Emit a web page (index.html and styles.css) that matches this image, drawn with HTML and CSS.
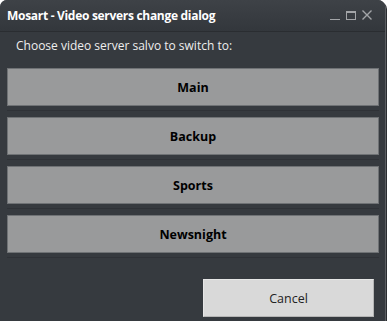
FILE: index.html
```html
<!DOCTYPE html>
<html lang="en">

<head>
    <meta charset="UTF-8">
    <title>Mosart - Video servers change dialog</title>
    <link rel="stylesheet" href="styles.css">
</head>

<body>
    <div class="window">
        <div class="title-bar">
            <div class="title">Mosart - Video servers change dialog</div>
            <div class="window-controls">
                <svg width="10" height="10" viewBox="0 0 10 10"><path d="M0 9.5H10" stroke="#a3a5a8" stroke-width="1"/></svg>
                <svg width="10" height="10" viewBox="0 0 10 10"><rect x="0.5" y="1.5" width="9" height="8" fill="none" stroke="#a3a5a8" stroke-width="1"/><path d="M0 2.5H10" stroke="#a3a5a8" stroke-width="1"/></svg>
                <svg width="10" height="10" viewBox="0 0 10 10"><path d="M0.5 0.5L9.5 9.5M9.5 0.5L0.5 9.5" stroke="#a3a5a8" stroke-width="1.4"/></svg>
            </div>
        </div>
        <div class="dialog-body">
            <div class="prompt">Choose video server salvo to switch to:</div>
            <div class="salvo-list">
                <div class="salvo-row"><button class="salvo-button">Main</button></div>
                <div class="salvo-row"><button class="salvo-button">Backup</button></div>
                <div class="salvo-row"><button class="salvo-button">Sports</button></div>
                <div class="salvo-row"><button class="salvo-button">Newsnight</button></div>
            </div>
            <div class="footer">
                <button class="cancel-button">Cancel</button>
            </div>
        </div>
    </div>
</body>

</html>
```

FILE: styles.css
```css
body,
html {
    margin: 0;
    padding: 0;
    background: #ffffff;
    font-family: "Open Sans", "Noto Sans", sans-serif;
}

.window {
    width: 385px;
    height: 321px;
    background: #363a3f;
    border-radius: 7px 7px 0 0;
    box-shadow: 1px 1px 0 #5a5d61, 2px 2px 0 #2a2d31;
    display: flex;
    flex-direction: column;
    overflow: hidden;
}

.title-bar {
    height: 31px;
    flex: none;
    background: linear-gradient(#3e4247, #33373c);
    border-bottom: 1px solid #2a2d31;
    display: flex;
    align-items: center;
    justify-content: space-between;
    padding: 0 13px 0 7px;
}

.title {
    color: #ffffff;
    font-weight: bold;
    font-size: 12px;
    letter-spacing: -0.3px;
}

.window-controls {
    display: flex;
    gap: 6px;
    margin-top: -2px;
}

.dialog-body {
    flex: 1;
    display: flex;
    flex-direction: column;
    padding: 0 6px 0 7px;
}

.prompt {
    color: #eeeeee;
    font-size: 12px;
    padding: 5px 0 0 9px;
    height: 36px;
    box-sizing: border-box;
}

.salvo-list {
    display: flex;
    flex-direction: column;
}

.salvo-row {
    height: 49px;
    border-bottom: 1px solid #2f3237;
    box-sizing: border-box;
    padding-top: 6px;
}

.salvo-row:first-child {
    height: 43px;
    padding-top: 0;
}

.salvo-button {
    width: 100%;
    height: 38px;
    background: #999a9b;
    border: 1px solid #6f7275;
    color: #000000;
    font-family: inherit;
    font-weight: bold;
    font-size: 12.5px;
    cursor: pointer;
}

.footer {
    display: flex;
    justify-content: flex-end;
    padding: 21px 5px 0 0;
}

.cancel-button {
    width: 171px;
    height: 38px;
    background: #d9d9d9;
    border: 1px solid #e6e6e6;
    border-bottom-color: #b5b5b5;
    border-right-color: #b5b5b5;
    color: #222222;
    font-family: inherit;
    font-size: 12.5px;
    cursor: pointer;
}
```
